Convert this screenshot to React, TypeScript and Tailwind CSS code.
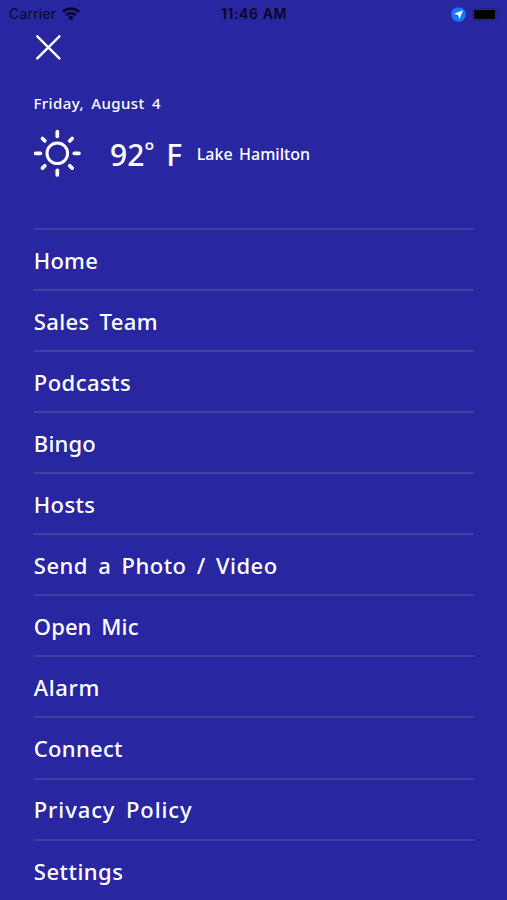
import { clsx } from 'clsx';

// Full-screen side menu: status bar, weather summary, navigation list.

interface MenuItem {
  label: string;
  className: string;
}

const MENU_ITEMS: MenuItem[] = [
  { label: 'Home', className: 'tracking-[0.2px]' },
  { label: 'Sales Team', className: 'tracking-[0.35px]' },
  { label: 'Podcasts', className: 'tracking-[0.45px]' },
  { label: 'Bingo', className: 'tracking-[0.2px]' },
  { label: 'Hosts', className: 'tracking-[0.35px]' },
  { label: 'Send a Photo / Video', className: 'tracking-[0.5px]' },
  { label: 'Open Mic', className: 'tracking-[0.1px]' },
  { label: 'Alarm', className: 'tracking-[0.6px]' },
  { label: 'Connect', className: 'tracking-[0.3px]' },
  { label: 'Privacy Policy', className: 'tracking-[0.9px]' },
  { label: 'Settings', className: 'tracking-[0.5px]' },
];

const RAYS = [0, 45, 90, 135, 180, 225, 270, 315];

function WifiIcon() {
  return (
    <svg width="18" height="14" viewBox="0 0 18 14" fill="none" stroke="currentColor">
      <path d="M1 4.8a11.4 11.4 0 0 1 16 0" strokeWidth="2.6" />
      <path d="M4 8.2a7.2 7.2 0 0 1 10 0" strokeWidth="2.4" />
      <path d="M9 13.2 6.2 10.4a4 4 0 0 1 5.6 0Z" fill="currentColor" stroke="none" />
    </svg>
  );
}

function StatusBar() {
  return (
    <header className="grid h-7 grid-cols-3 items-center pl-[9px] pr-2 font-['Inter','Liberation_Sans',sans-serif] text-[14px] leading-none text-[#07072b]">
      <div className="flex items-center gap-1.5">
        <span className="font-normal tracking-[0.2px]">Carrier</span>
        <WifiIcon />
      </div>
      <span className="text-center font-semibold tracking-[0.6px]">11:46 AM</span>
      <div className="flex items-center justify-end gap-1.5">
        <svg width="15" height="15" viewBox="0 0 15 15">
          <circle cx="7.5" cy="7.5" r="7.3" fill="#1479f5" />
          <path d="M12 3.2 8.5 12 7.1 8 3 6.7Z" fill="#fff" />
        </svg>
        <div className="flex items-center gap-px">
          <div className="h-[13px] w-[25px] rounded-[3px] border border-[#211f8c] p-px">
            <div className="h-full rounded-[1px] bg-black" />
          </div>
          <div className="h-1 w-px rounded-r-full bg-[#1f1d80]" />
        </div>
      </div>
    </header>
  );
}

function SunIcon() {
  return (
    <svg width="48" height="48" viewBox="-23.3 -24.3 48 48" fill="none" stroke="white" strokeLinecap="round">
      <circle r="10.3" strokeWidth="3" />
      {RAYS.map((deg) => (
        <path key={deg} d={deg % 90 ? 'M0-17.6V-21' : 'M0-17V-21.6'} strokeWidth="3.7" transform={`rotate(${deg})`} />
      ))}
    </svg>
  );
}

function Weather() {
  return (
    <section className="flex h-12 items-center">
      <SunIcon />
      <div className="ml-[28.5px] flex items-center pt-[3px]">
        <span className="text-[30px] leading-none">92</span>
        <span className="mb-2 w-[22px] text-[24px] leading-none">°</span>
        <span className="text-[30px] leading-none">F</span>
        <span className="-mt-0.5 ml-[14.5px] text-[16px] leading-none tracking-[0.05px] [word-spacing:2px]">
          Lake Hamilton
        </span>
      </div>
    </section>
  );
}

export default function App() {
  return (
    <div className="h-[900px] w-[507px] overflow-hidden bg-[#2926a2] font-['Noto_Sans','Open_Sans',sans-serif] font-medium text-white">
      <StatusBar />
      <main className="px-[33.5px]">
        <button type="button" aria-label="Close" className="mt-1.5 ml-[2.5px] block">
          <svg width="26" height="26" viewBox="0 0 26 26" fill="none" stroke="white" strokeWidth="2.4" strokeLinecap="round">
            <path d="M1.3 2.3 23.4 24.4M23.4 2.3 1.3 24.4" />
          </svg>
        </button>
        <p className="mt-[33px] mb-4 text-[15px] leading-5 tracking-[0.4px] [word-spacing:3px]">Friday, August 4</p>
        <Weather />
        <nav className="mt-[50.7px]">
          <ul>
            {MENU_ITEMS.map((item) => (
              <li key={item.label} className="h-[61.1px] border-t-2 border-[#4341a0]">
                <a
                  href="#"
                  className={clsx(
                    'flex h-full items-center pt-[0.7px] pl-[0.3px] text-[22px] leading-none [word-spacing:4px]',
                    item.className
                  )}
                >
                  {item.label}
                </a>
              </li>
            ))}
          </ul>
        </nav>
      </main>
    </div>
  );
}
